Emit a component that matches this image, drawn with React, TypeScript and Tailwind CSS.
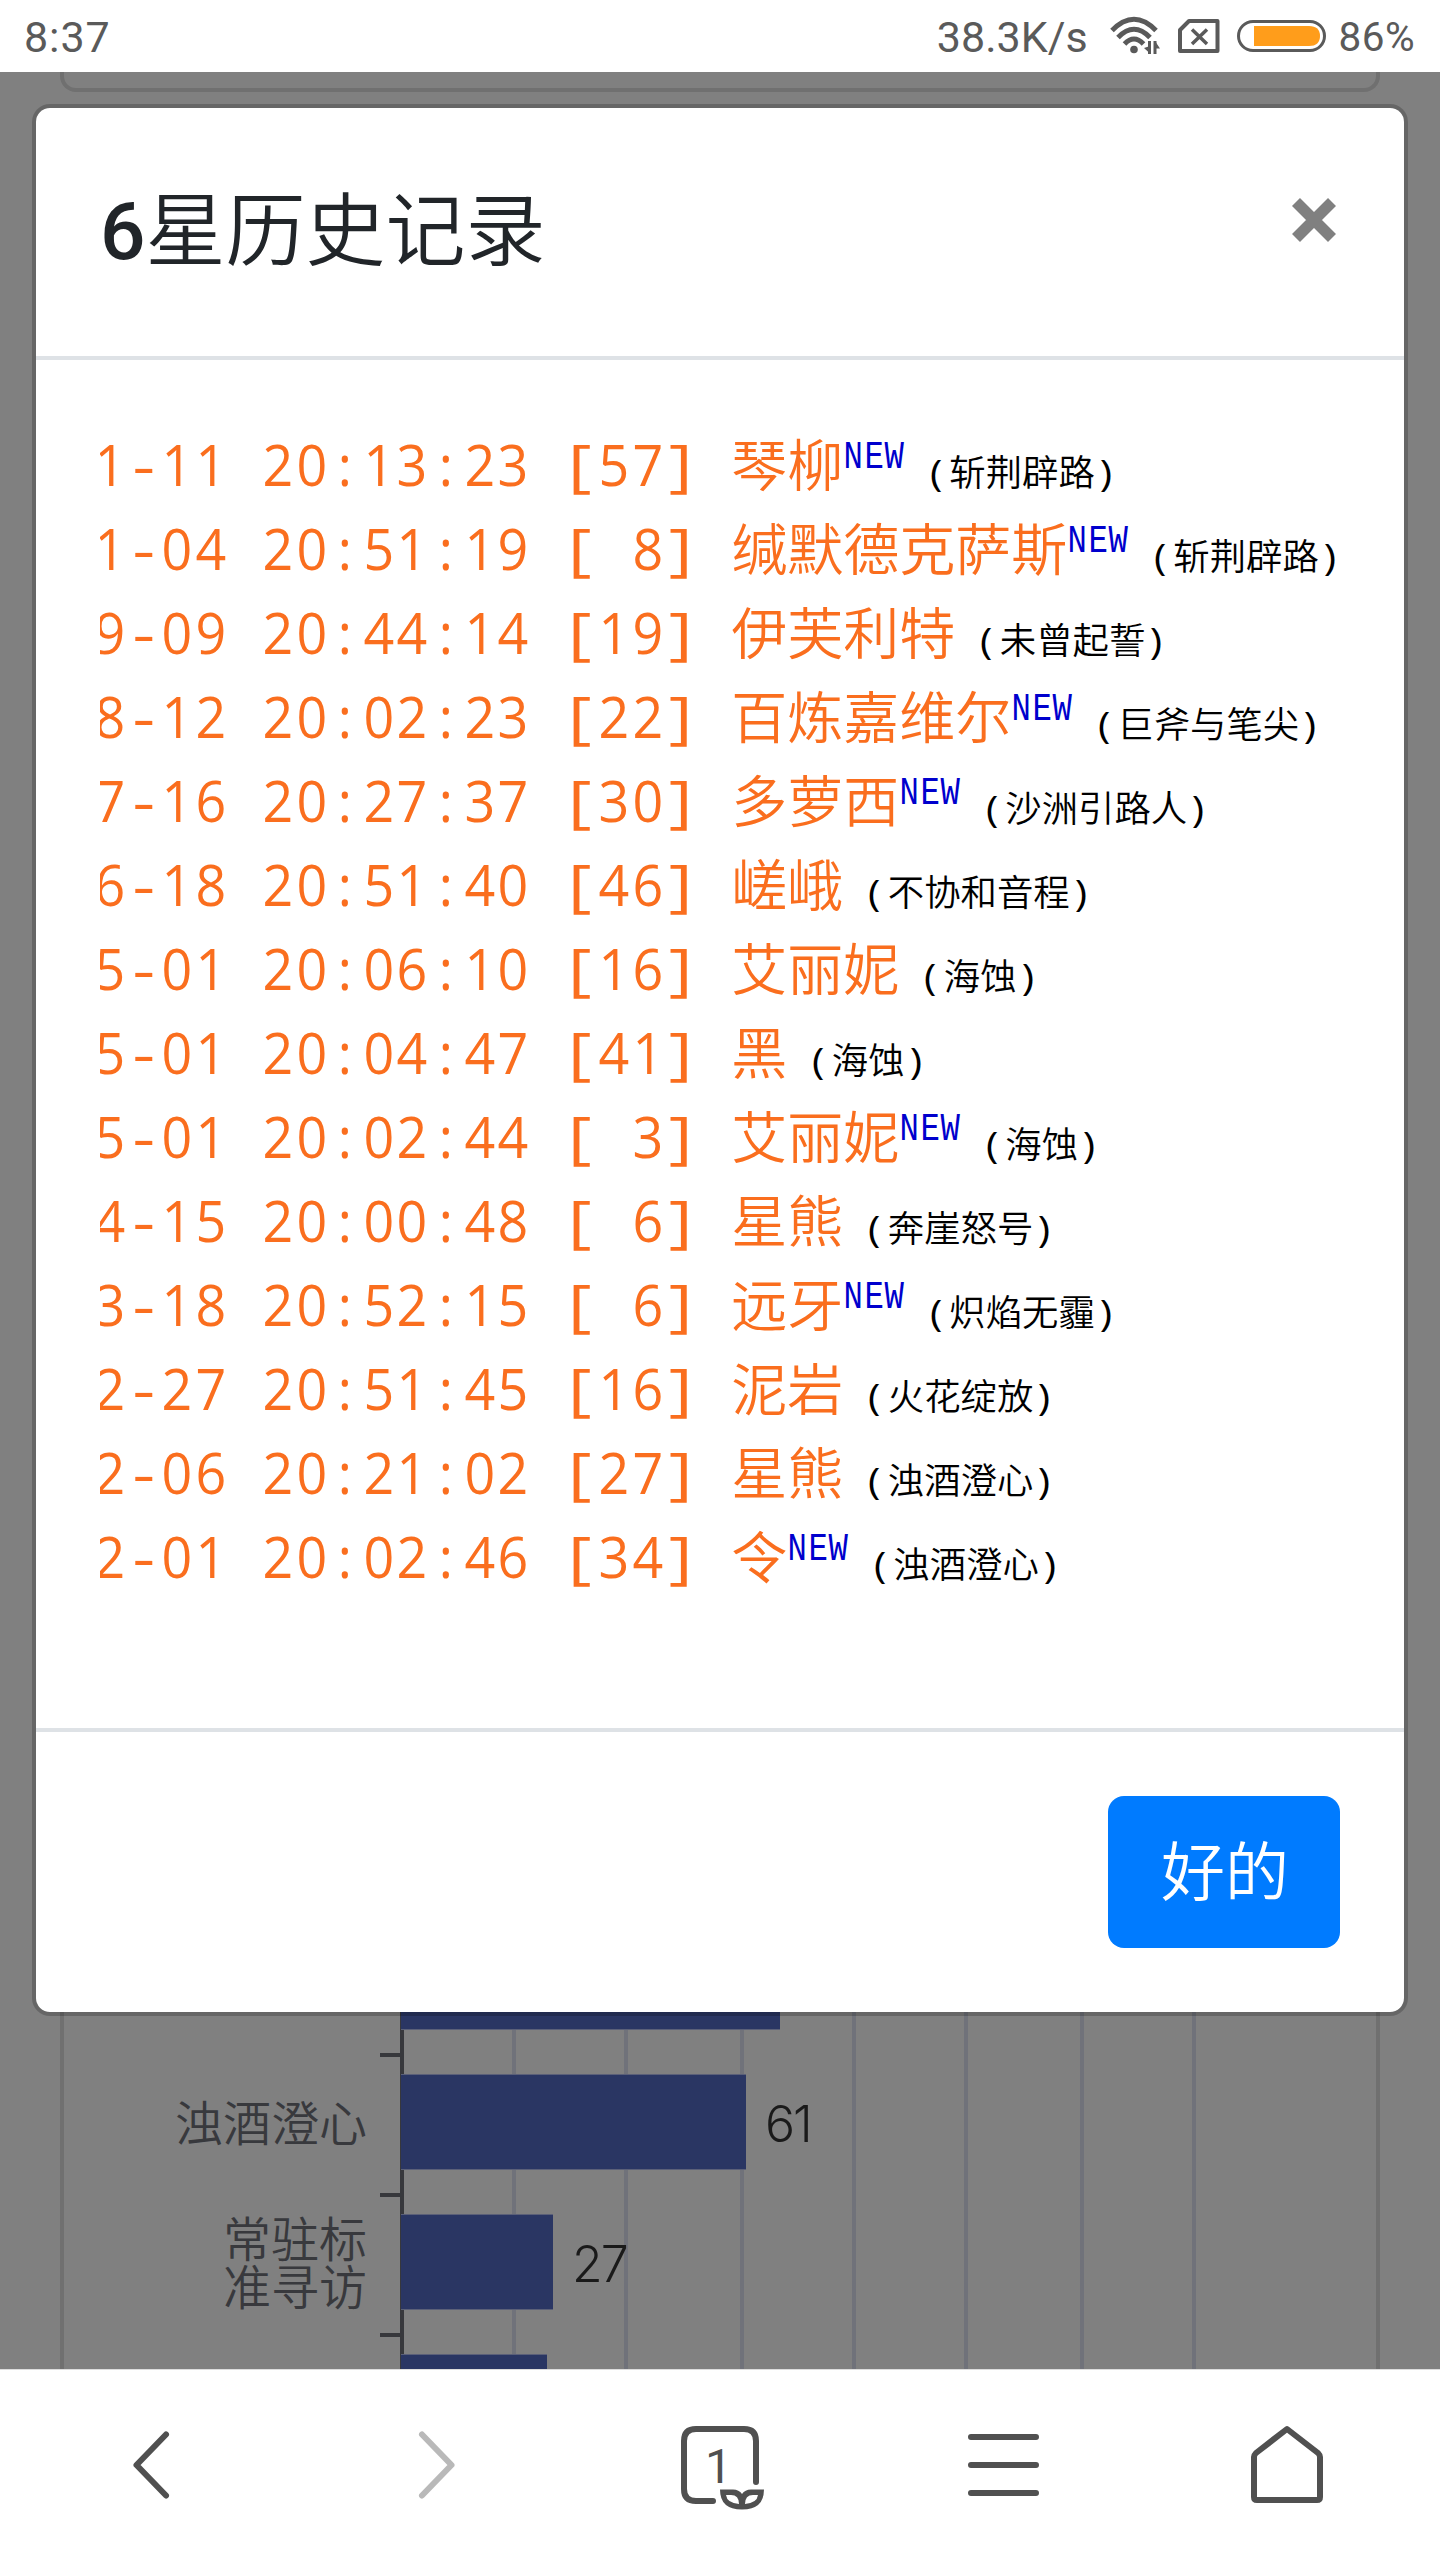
interface HistoryRecord {
  time: string;
  name: string;
  isNew?: boolean;
  pool: string;
}

const RECORDS: HistoryRecord[] = [
  { time: "1-11 20:13:23 [57] ", name: "琴柳", isNew: true, pool: "斩荆辟路" },
  { time: "1-04 20:51:19 [ 8] ", name: "缄默德克萨斯", isNew: true, pool: "斩荆辟路" },
  { time: "9-09 20:44:14 [19] ", name: "伊芙利特", pool: "未曾起誓" },
  { time: "8-12 20:02:23 [22] ", name: "百炼嘉维尔", isNew: true, pool: "巨斧与笔尖" },
  { time: "7-16 20:27:37 [30] ", name: "多萝西", isNew: true, pool: "沙洲引路人" },
  { time: "6-18 20:51:40 [46] ", name: "嵯峨", pool: "不协和音程" },
  { time: "5-01 20:06:10 [16] ", name: "艾丽妮", pool: "海蚀" },
  { time: "5-01 20:04:47 [41] ", name: "黑", pool: "海蚀" },
  { time: "5-01 20:02:44 [ 3] ", name: "艾丽妮", isNew: true, pool: "海蚀" },
  { time: "4-15 20:00:48 [ 6] ", name: "星熊", pool: "奔崖怒号" },
  { time: "3-18 20:52:15 [ 6] ", name: "远牙", isNew: true, pool: "炽焰无霾" },
  { time: "2-27 20:51:45 [16] ", name: "泥岩", pool: "火花绽放" },
  { time: "2-06 20:21:02 [27] ", name: "星熊", pool: "浊酒澄心" },
  { time: "2-01 20:02:46 [34] ", name: "令", isNew: true, pool: "浊酒澄心" },
];

function StatusBar() {
  return (
    <header className="flex h-[72px] items-center bg-white pl-6 pr-[25px] font-['Roboto',sans-serif] text-[#5a5a5a]">
      <span className="mt-[3px] text-[43px] leading-none tracking-[0.9px]">8:37</span>
      <span className="ml-auto mt-[3px] text-[43px] leading-none">38.3K/s</span>
      <svg className="ml-[22px]" width="52" height="40" viewBox="0 0 52 40" fill="none" stroke="#5a5a5a">
        <path d="M2 14.500Q24 -8 46 14.500" strokeWidth="5" />
        <path d="M8 21.500Q24 5 40 21.500" strokeWidth="5" />
        <path d="M14.500 28Q24 18 33.500 28" strokeWidth="5" />
        <circle cx="24" cy="33.500" r="3.8" fill="#5a5a5a" stroke="none" />
        <path d="M39.500 25V38M45 38V25" strokeWidth="3" />
        <path d="M40 37.500V30L34 32ZM45 25L50 32.500H45Z" fill="#5a5a5a" stroke="none" />
      </svg>
      <svg className="ml-[16px]" width="42" height="34" viewBox="0 0 42 34" fill="none" stroke="#5a5a5a" strokeWidth="4">
        <path d="M11 2H39.500V32H2V11Z" strokeLinejoin="round" />
        <path d="M14 10.500 29 25M29 10.500 14 25" strokeWidth="3.500" />
      </svg>
      <svg className="ml-[17px]" width="89" height="32" viewBox="0 0 89 32">
        <rect x="1.500" y="1.500" width="86" height="29" rx="14.500" fill="none" stroke="#5a5a5a" strokeWidth="3" />
        <path d="M17 6H72Q83 6 83 16T72 26H17Z" fill="#ff9d1b" />
      </svg>
      <span className="ml-[13px] mt-[3px] text-[40.500px] leading-none tracking-[0.4px]">86%</span>
    </header>
  );
}

function Bar({ width, value }: { width: number; value?: number }) {
  return (
    <div className="flex h-[96px] items-center">
      <div className="h-full border-y border-[#5b6078] bg-[#2a3663]" style={{ width }} />
      {value && (
        <span className="ml-[19px] mt-[3px] font-['Inter',sans-serif] text-[50px] font-light leading-none tracking-[-2px] text-[#1a1a1a]">
          {value}
        </span>
      )}
    </div>
  );
}

const GRID_LINES = [108, 220, 336, 448, 560, 676, 788];

function Chart() {
  return (
    <section className="mx-[60px] mt-5 flex h-[2257px] items-end overflow-hidden border-x-4 border-[#707070]">
      <div className="w-[316px] shrink-0 pr-[13px] text-right font-['Noto_Sans_CJK_SC',sans-serif] text-[48px] font-[350] leading-[48px] text-[#38393d]">
        <p className="mb-[68px]">浊酒澄心</p>
        <p className="mb-[61px]">
          常驻标
          <br />
          准寻访
        </p>
      </div>
      <div className="flex h-[374px] w-5 shrink-0 flex-col gap-[136px] pt-[58px]">
        {[0, 1, 2].map((i) => (
          <div key={i} className="h-1 shrink-0 bg-[#37383c]" />
        ))}
      </div>
      <div className="relative h-[374px] grow border-l-4 border-[#37383c]">
        {GRID_LINES.map((x) => (
          <div key={x} className="absolute inset-y-0 w-1 bg-[#70727a]" style={{ left: x }} />
        ))}
        <div className="relative -ml-[3px] -mt-[61px] flex flex-col gap-[44px]">
          <Bar width={379} />
          <Bar width={345} value={61} />
          <Bar width={152} value={27} />
          <Bar width={146} />
        </div>
      </div>
    </section>
  );
}

function cellClass(c: string) {
  if (c === "[" || c === "]") return "w-[33.6px] shrink-0 scale-x-130 text-center";
  if (c === "-") return "w-[33.6px] shrink-0 scale-x-125 text-center";
  return "w-[33.6px] shrink-0 scale-x-96 text-center";
}

// One cell per character keeps the columns aligned like a monospace font
function TimeCells({ text }: { text: string }) {
  return (
    <span className="flex">
      {text.split("").map((c, i) => (
        <span key={i} className={cellClass(c)}>
          {c}
        </span>
      ))}
    </span>
  );
}

function NewTag() {
  return (
    <span className="relative -top-[18px] flex w-[61.500px] font-['Liberation_Mono',monospace] text-[38px] leading-none text-[#0000cd]">
      {["N", "E", "W"].map((c) => (
        <span key={c} className="flex w-[20.500px] shrink-0 scale-x-85 justify-center">
          {c}
        </span>
      ))}
    </span>
  );
}

function HistoryRow({ record }: { record: HistoryRecord }) {
  return (
    <div className="flex h-[84px] items-baseline whitespace-pre font-['Open_Sans','Noto_Sans_CJK_SC',sans-serif] text-[56px] leading-[84px] text-[#fa6e1e]">
      <TimeCells text={record.time} />
      <span className="font-[350]">{record.name}</span>
      {record.isNew && <NewTag />}
      <span className="ml-[21px] flex text-[36.400px] leading-none text-black">
        <span className="w-[23.500px] scale-x-115 pl-[5px]">(</span>
        <span className="font-[350]">{record.pool}</span>
        <span className="w-[21.800px] scale-x-115 text-center">)</span>
      </span>
    </div>
  );
}

function HistoryModal() {
  return (
    <div className="absolute left-8 top-8 flex h-[1912px] w-[1376px] flex-col rounded-[18px] border-4 border-black/20 bg-white bg-clip-padding">
      <div className="flex h-[252px] items-start justify-between border-b-4 border-[#dee2e6] pl-16 pr-[67px] pt-[64px]">
        <h5 className="font-['Roboto','Noto_Sans_CJK_SC',sans-serif] text-[80px] leading-[120px] text-[#212529]">
          <span className="font-medium">6</span>
          <span className="font-[350]">星历史记录</span>
        </h5>
        <button className="mt-[25px]" aria-label="Close">
          <svg width="46" height="46" viewBox="0 0 46 46" stroke="#808080" strokeWidth="11.300">
            <path d="M5 5 41 41M41 5 5 41" />
          </svg>
        </button>
      </div>
      <div className="ml-16 grow overflow-hidden pt-[62px]">
        <div className="-ml-[7px]">
          {RECORDS.map((r) => (
            <HistoryRow key={r.time} record={r} />
          ))}
        </div>
      </div>
      <div className="flex h-[284px] shrink-0 items-center justify-end border-t-4 border-[#dee2e6] pr-16">
        <button className="h-[152px] w-[232px] rounded-2xl bg-[#007bff] pb-[10px] pl-0.5 font-['Noto_Sans_CJK_SC',sans-serif] text-[64px] font-[350] text-white">
          好的
        </button>
      </div>
    </div>
  );
}

function BottomNav() {
  return (
    <nav className="flex h-[191px] shrink-0 items-center justify-between border-t border-[#ddd] bg-white pl-[102px] pr-[105px]">
      <svg width="96" height="96" viewBox="0 0 96 96" fill="none" stroke="#505050" strokeWidth="6" strokeLinecap="round" strokeLinejoin="round">
        <path d="M64 17.500 34.500 48 64 78.500" />
      </svg>
      <svg width="96" height="96" viewBox="0 0 96 96" fill="none" stroke="#b9b9b9" strokeWidth="6" strokeLinecap="round" strokeLinejoin="round">
        <path d="M36 17.500 65.500 48 36 78.500" />
      </svg>
      <div className="relative flex h-24 w-24 items-center justify-center">
        <svg className="absolute inset-0" width="96" height="96" viewBox="0 0 96 96" fill="none">
          <path d="M85 65V24Q85 12 73 12H25Q13 12 13 24V72Q13 84 25 84H42" stroke="#505050" strokeWidth="6" strokeLinecap="round" />
          <path
            d="M49 72.500H62Q68 72.500 71 77Q74 72.500 80 72.500H93Q93 92.500 71 92.500Q49 92.500 49 72.500ZM55 78Q56 86 68 87Q68 78 60 78ZM87 78H82Q74 78 74 87Q86 86 87 78Z"
            fill="#505050"
            fillRule="evenodd"
          />
        </svg>
        <span className="mt-1 font-['Roboto',sans-serif] text-[48px] leading-none text-[#505050]">1</span>
      </div>
      <svg width="96" height="96" viewBox="0 0 96 96" fill="none" stroke="#505050" strokeWidth="6" strokeLinecap="round">
        <path d="M16 20H81M16 48H81M16 76H81" />
      </svg>
      <svg width="96" height="96" viewBox="0 0 96 96" fill="none" stroke="#505050" strokeWidth="6" strokeLinejoin="round">
        <path d="M48 12 79 36Q81 38 81 40V80Q81 83 78 83H18Q15 83 15 80V40Q15 38 17 36Z" />
      </svg>
    </nav>
  );
}

export default function App() {
  return (
    <div className="flex h-[2560px] w-[1440px] flex-col overflow-hidden bg-white">
      <StatusBar />
      <main className="relative h-[2297px] shrink-0 overflow-hidden bg-[#808080]">
        <div className="mx-[60px] h-5 rounded-b-2xl border-4 border-t-0 border-[#707070]" />
        <Chart />
        <HistoryModal />
      </main>
      <BottomNav />
    </div>
  );
}
